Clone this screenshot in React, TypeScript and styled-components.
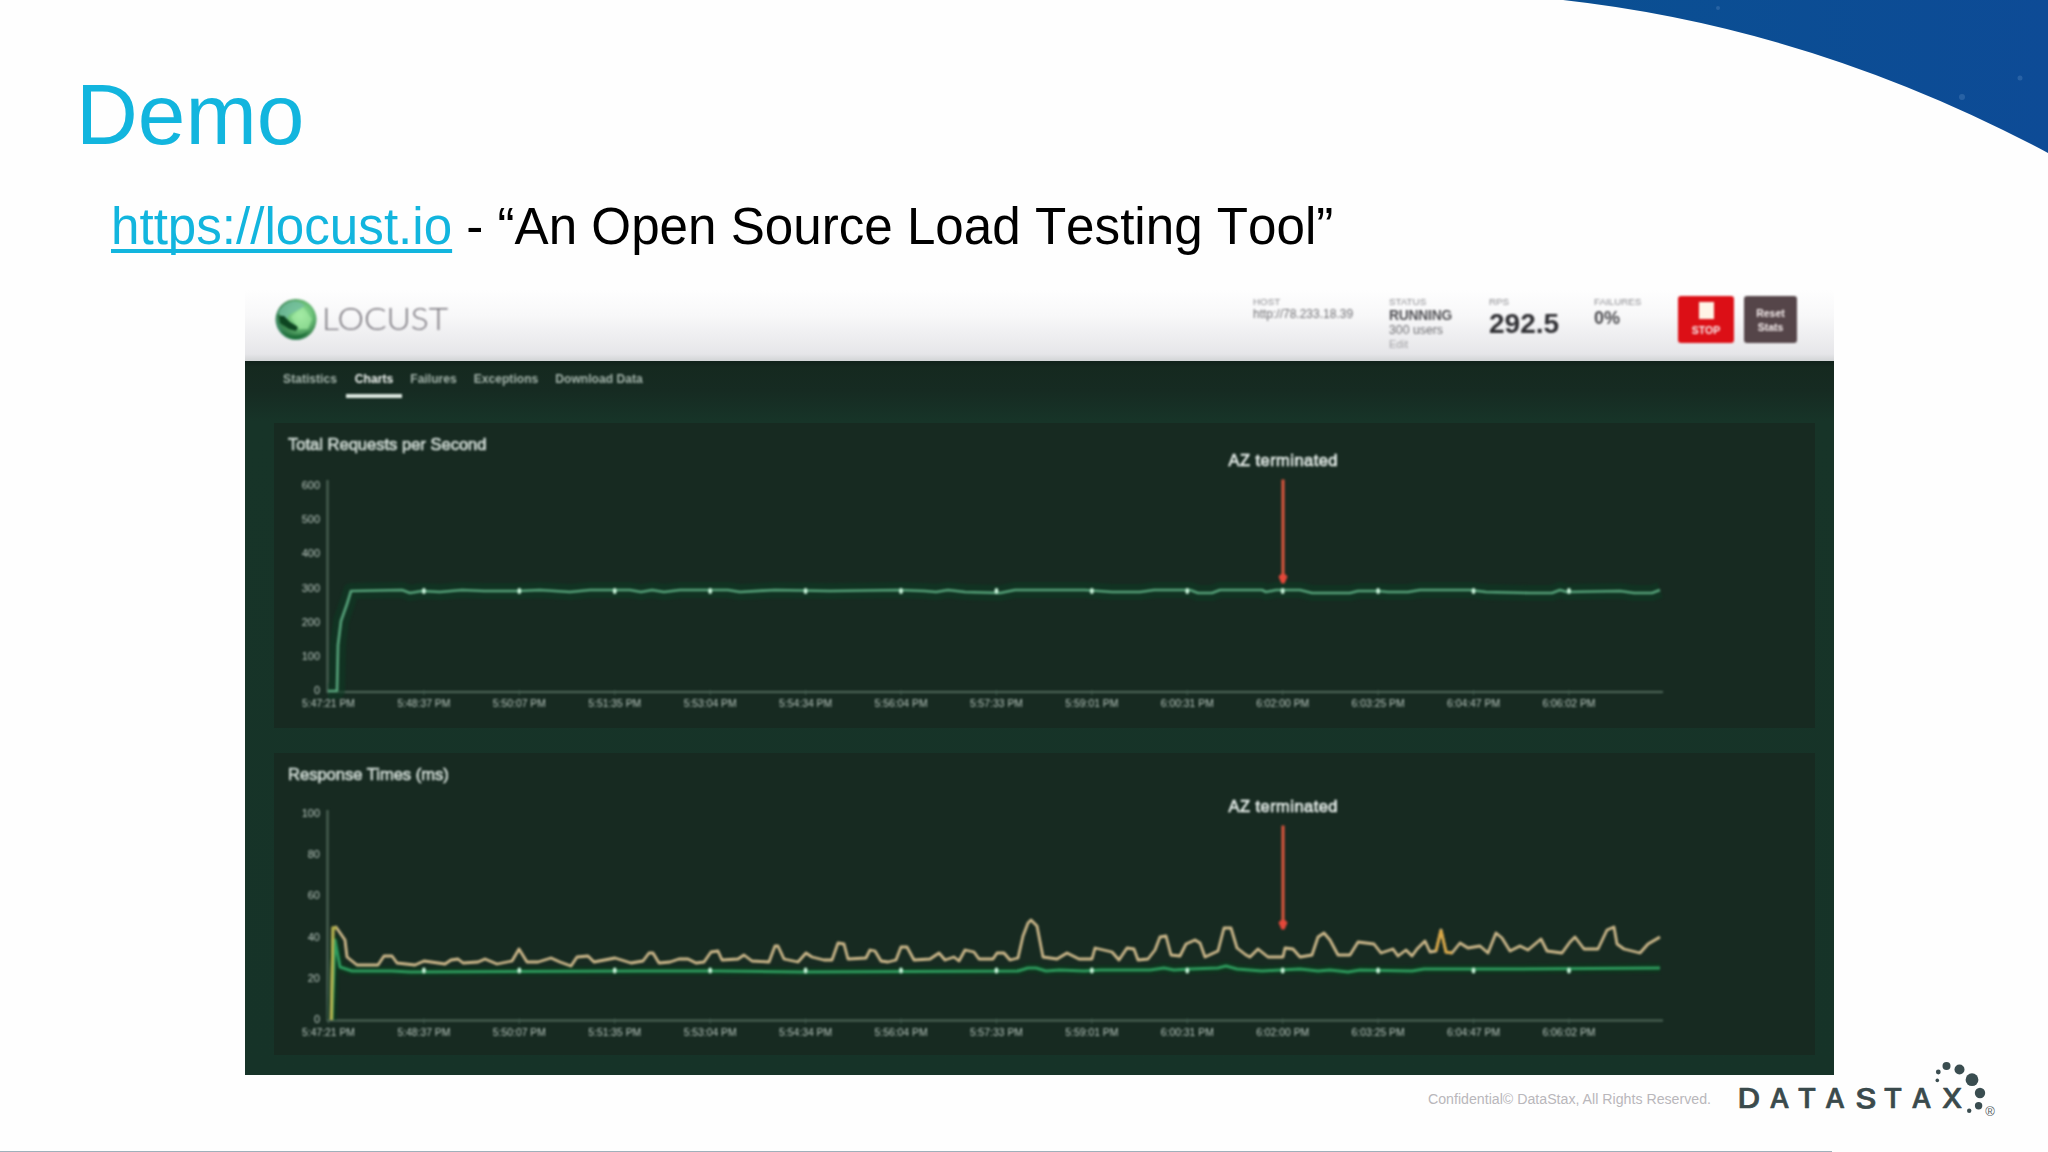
import React from "react";
import styled, { createGlobalStyle } from "styled-components";

const GlobalStyle = createGlobalStyle`
  * { box-sizing: border-box; }
  html, body { margin: 0; padding: 0; background: #fefefe; }
  body { font-family: "Liberation Sans", Arial, sans-serif; }
`;

const Slide = styled.main`
  position: relative;
  display: flex;
  flex-direction: column;
  width: 2048px;
  height: 1152px;
  overflow: hidden;
  background: #fefefe;
`;

const Corner = styled.svg`
  position: absolute;
  top: 0;
  right: 0;
`;

const Title = styled.h1`
  margin: 0;
  padding: 66px 0 0 76px;
  height: 190px;
  font-size: 85.6px;
  line-height: 97px;
  font-weight: 400;
  color: #12b5de;
`;

const Subtitle = styled.p`
  margin: 0;
  padding-left: 111px;
  height: 100px;
  font-size: 51.15px;
  line-height: 73px;
  white-space: nowrap;
  font-kerning: none;
  color: #000;
`;

const Link = styled.a`
  color: #12b5de;
  text-decoration: underline;
  text-decoration-thickness: 3.5px;
  text-underline-offset: 5px;
  text-decoration-skip-ink: none;
`;

const Dashboard = styled.section`
  display: flex;
  flex-direction: column;
  width: 1589px;
  height: 785px;
  margin-left: 245px;
`;

const Header = styled.header`
  display: flex;
  justify-content: space-between;
  height: 71px;
  flex: none;
  padding: 6px 37px 0 29px;
  background: linear-gradient(#fefefe 0, #f8f8f9 35%, #e6e6e9 90%, #d2d4d6 100%);
`;

const Brand = styled.div`
  display: flex;
  align-items: center;
  gap: 4px;
  height: 48px;
  filter: blur(0.8px);
`;

const Stats = styled.div`
  display: flex;
  filter: blur(0.8px);
`;

const Stat = styled.div<{ $w: number }>`
  display: flex;
  flex-direction: column;
  width: ${(p) => p.$w}px;
  white-space: nowrap;
`;

const StatLabel = styled.span`
  height: 12px;
  font-size: 9.8px;
  line-height: 12px;
  color: #8c8c90;
`;

const StatValue = styled.span<{ $size: number; $line: number; $color?: string; $bold?: boolean; $track?: number }>`
  font-size: ${(p) => p.$size}px;
  line-height: ${(p) => p.$line}px;
  font-weight: ${(p) => (p.$bold ? 700 : 400)};
  letter-spacing: ${(p) => p.$track ?? 0}px;
  color: ${(p) => p.$color ?? "#707074"};
`;

const HeaderButton = styled.button<{ $bg: string; $w: number }>`
  display: flex;
  flex-direction: column;
  align-items: center;
  justify-content: center;
  width: ${(p) => p.$w}px;
  height: 47px;
  margin-right: ${(p) => (p.$w > 54 ? 10 : 0)}px;
  padding: 0;
  border: 0;
  border-radius: 3px;
  background: ${(p) => p.$bg};
  color: #f7eeee;
  font: 700 10.5px/14px "Liberation Sans", Arial, sans-serif;
`;

const StopSquare = styled.i`
  width: 15px;
  height: 17px;
  margin-bottom: 4px;
  background: #fff4e6;
`;

const Body = styled.div`
  display: flex;
  flex-direction: column;
  flex: 1;
  background: linear-gradient(#10211a 0, #15291f 6px, #162b22 30px, #173428 60px, #163328 100%);
`;

const Tabs = styled.nav`
  display: flex;
  height: 62px;
  padding: 8px 0 0 29px;
  filter: blur(0.8px);
`;

const Tab = styled.span<{ $w: number; $active?: boolean }>`
  display: flex;
  justify-content: center;
  width: ${(p) => p.$w}px;
  height: 29px;
  padding-top: 2px;
  font-size: 12.1px;
  line-height: 16px;
  font-weight: 700;
  white-space: nowrap;
  color: ${(p) => (p.$active ? "#f4f8f5" : "#a5b5ac")};
  border-bottom: ${(p) => (p.$active ? "4px solid #dfe9e2" : "0")};
`;

const Card = styled.article<{ $h: number; $gap: number }>`
  display: flex;
  flex-direction: column;
  width: 1541px;
  height: ${(p) => p.$h}px;
  flex: none;
  margin: 0 0 ${(p) => p.$gap}px 29px;
  background: #172a21;
`;

const CardTitle = styled.h2`
  height: 42px;
  flex: none;
  margin: 0;
  padding: 11px 0 0 14px;
  font-size: 16.55px;
  line-height: 22px;
  font-weight: 400;
  color: #cfdad4;
  -webkit-text-stroke: 0.7px #cfdad4;
  filter: blur(0.8px);
`;

const ChartSvg = styled.svg`
  display: block;
  flex: none;
  overflow: visible;
  filter: blur(0.8px);
  font-family: "Liberation Sans", Arial, sans-serif;
`;

const Footer = styled.footer`
  display: flex;
  flex: 1;
  padding-left: 1428px;
`;

const Copyright = styled.span`
  width: 308px;
  padding-top: 15px;
  font-size: 14.18px;
  line-height: 18px;
  white-space: nowrap;
  color: #b9b7bb;
`;

const LogoSvg = styled.svg`
  display: block;
  margin-top: -18px;
`;

const BottomRule = styled.div`
  width: 1832px;
  height: 1px;
  flex: none;
  background: #9fb0ba;
`;

const times = [
  "5:47:21 PM", "5:48:37 PM", "5:50:07 PM", "5:51:35 PM", "5:53:04 PM", "5:54:34 PM", "5:56:04 PM",
  "5:57:33 PM", "5:59:01 PM", "6:00:31 PM", "6:02:00 PM", "6:03:25 PM", "6:04:47 PM", "6:06:02 PM",
];
const tickX = (i: number) => 328.5 + i * 95.42;

const requests =
  "328,691 337,691 338,645 341,621 347,604 351,591 402,590 410,593 422,591 440,592 462,590 484,591 518,591 540,590 570,592 590,590 630,590 641,592 652,590 664,592 680,590 728,590 740,592 775,590 830,591 900,590 925,591 936,592 948,590 965,592 1000,593 1015,590 1085,590 1112,592 1140,592 1154,590 1190,590 1198,593 1212,593 1220,590 1262,590 1266,592 1276,590 1300,590 1312,593 1350,593 1358,591 1378,591 1388,592 1408,592 1420,590 1470,590 1486,592 1530,593 1552,593 1560,590 1567,592 1620,591 1634,593 1652,593 1660,590";

const median =
  "332,1020 335,940 340,967 352,971 392,971 410,972 640,971 720,971 800,972 1018,971 1028,968 1036,968 1046,971 1060,970 1084,971 1100,970 1150,970 1164,968 1174,970 1190,969 1218,968 1226,966 1237,969 1262,971 1300,969 1318,971 1330,970 1348,972 1360,970 1412,971 1424,969 1520,969 1660,968";

const percentile =
  "331,1020 333,928 336,927 345,940 347,957 357,965 378,965 384,956 392,956 397,963 415,965 424,961 445,964 451,960 458,959 463,963 478,962 485,959 497,964 512,961 519,949 527,962 538,962 551,958 560,962 571,966 577,957 588,956 594,962 615,958 631,963 643,961 649,953 653,953 659,963 670,962 679,959 688,959 696,963 704,962 711,952 718,951 722,960 738,959 744,955 752,961 769,962 775,946 778,946 784,959 798,962 806,953 812,957 824,960 832,960 838,943 844,944 848,959 866,958 870,950 875,951 881,961 888,962 896,960 901,947 907,947 914,960 930,959 939,953 945,960 954,957 959,961 965,950 974,952 979,959 993,959 997,953 1004,953 1010,960 1018,958 1023,936 1028,923 1031,920 1037,926 1043,957 1057,959 1067,953 1079,959 1092,959 1095,948 1112,952 1119,960 1127,948 1134,949 1138,960 1148,959 1155,950 1160,937 1166,936 1171,955 1180,956 1186,944 1195,940 1200,943 1205,957 1218,951 1224,928 1231,928 1237,948 1246,955 1250,957 1258,949 1268,957 1283,957 1285,948 1293,949 1300,957 1312,955 1318,937 1324,933 1330,940 1338,955 1350,955 1358,942 1374,944 1381,953 1393,949 1398,956 1406,950 1412,956 1417,949 1425,941 1430,952 1436,951 1441,930 1446,952 1452,953 1460,943 1468,948 1480,946 1488,953 1496,933 1502,938 1510,951 1520,946 1528,950 1541,939 1547,951 1562,953 1570,942 1575,937 1584,949 1598,949 1607,930 1614,927 1617,944 1624,949 1640,953 1648,944 1660,937";

interface ChartProps {
  top: number;
  height: number;
  axisTop: number;
  axisBottom: number;
  labels: string[];
  step: number;
  labelTop: number;
  markerY: number;
  annotationY: number;
  children: React.ReactNode;
}

function Chart(p: ChartProps) {
  const arrowTop = p.annotationY + 19;
  return (
    <ChartSvg width={1541} height={p.height} viewBox={`274 ${p.top} 1541 ${p.height}`}>
      <path d={`M327.5 ${p.axisTop}V${p.axisBottom}H1663`} fill="none" stroke="#50695b" strokeWidth={2} />
      {p.labels.map((l, i) => (
        <text key={l} x={320} y={p.labelTop + i * p.step + 4} fontSize={11} textAnchor="end" fill="#b6c4bc">
          {l}
        </text>
      ))}
      {times.map((t, i) => (
        <g key={t}>
          <path d={`M${tickX(i)} ${p.axisBottom - 2}v5`} stroke="#486153" strokeWidth={1} />
          <text
            x={tickX(i)}
            y={p.axisBottom + 15}
            fontSize={10.5}
            textAnchor="middle"
            textLength={53}
            lengthAdjust="spacingAndGlyphs"
            fill="#b6c4bc"
          >
            {t}
          </text>
        </g>
      ))}
      {p.children}
      {times.slice(1).map((t, i) => (
        <ellipse key={t} cx={tickX(i + 1)} cy={p.markerY} rx={1.9} ry={3} fill="#c9f3da" />
      ))}
      <text
        x={1283}
        y={p.annotationY + 5.5}
        fontSize={16.5}
        textAnchor="middle"
        textLength={109}
        fill="#e2eae6"
        stroke="#e2eae6"
        strokeWidth={0.7}
      >
        AZ terminated
      </text>
      <path d={`M1283 ${arrowTop}v99`} stroke="#d4543c" strokeWidth={3.2} />
      <path d={`M1278.5 ${arrowTop + 97}q4.500 -6 9 0l-3 7h-3z`} fill="#e4483a" />
    </ChartSvg>
  );
}

const letters: [string, number, number][] = [
  ["D", 1749, 1.15], ["A", 1779.5, 1], ["T", 1807, 1.05], ["A", 1835, 1],
  ["S", 1866, 1.2], ["T", 1893, 1.05], ["A", 1921.5, 1], ["X", 1952, 1.05],
];
const dots: [number, number, number][] = [
  [1937.3, 1080.4, 1.8], [1938.3, 1072, 2.4], [1946.5, 1066, 4], [1959.5, 1069.5, 5],
  [1972, 1079.7, 6.4], [1980, 1093, 5.2], [1978.6, 1105.8, 3.7], [1969.2, 1110.7, 2.2],
];

export default function App() {
  return (
    <>
      <GlobalStyle />
      <Slide>
        <Corner width={488} height={156} viewBox="1560 0 488 156">
          <defs>
            <linearGradient id="blue" x1="0" x2="1">
              <stop offset="0" stopColor="#0a4f92" />
              <stop offset="1" stopColor="#0d4b96" />
            </linearGradient>
          </defs>
          <path d="M1563 0Q1814 28 2048 153V0Z" fill="url(#blue)" />
          <g fill="#4378b4" opacity={0.5}>
            <circle cx={1718} cy={8} r={2} />
            <circle cx={1962} cy={97} r={3} />
            <circle cx={2020} cy={78} r={2.5} />
          </g>
        </Corner>
        <Title>Demo</Title>
        <Subtitle>
          <Link>https://locust.io</Link> - “An Open Source Load Testing Tool”
        </Subtitle>
        <Dashboard>
          <Header>
            <Brand>
              <svg width={44} height={44} viewBox="0 0 44 44">
                <defs>
                  <radialGradient id="globe" cx="0.6" cy="0.4" r="0.6">
                    <stop offset="0" stopColor="#a8efaa" />
                    <stop offset="0.5" stopColor="#6cc178" />
                    <stop offset="0.85" stopColor="#38834d" />
                    <stop offset="1" stopColor="#3f8a66" />
                  </radialGradient>
                </defs>
                <circle cx={22} cy={21.5} r={20.5} fill="url(#globe)" />
                <path d="M4 15Q8 5 19 3Q27 3 31 8L15 17L12 23Z" fill="#73bda0" opacity={0.8} />
                <path d="M5 18L10 18L16 24L24 29L22 33L15 31L6 25Z" fill="#0d4521" />
                <path d="M17 19L29 9L38 21L34 31L25 31Z" fill="#a1eaa2" opacity={0.65} />
                <path d="M6 31Q19 43 35 33Q28 42 20 41Q11 40 6 31Z" fill="#1f7039" />
              </svg>
              <svg width={132} height={44}>
                <text
                  x={0}
                  y={32}
                  fontFamily="Lato, sans-serif"
                  fontWeight={300}
                  fontSize={31}
                  textLength={126}
                  lengthAdjust="spacingAndGlyphs"
                  fill="#77747b"
                >
                  LOCUST
                </text>
              </svg>
            </Brand>
            <Stats>
              <Stat $w={136}>
                <StatLabel>HOST</StatLabel>
                <StatValue $size={12} $line={13}>http://78.233.18.39</StatValue>
              </Stat>
              <Stat $w={100}>
                <StatLabel>STATUS</StatLabel>
                <StatValue $size={13.8} $line={16} $bold $color="#505054" $track={-0.2}>RUNNING</StatValue>
                <StatValue $size={12.3} $line={13}>300 users</StatValue>
                <StatValue $size={11} $line={14} $color="#a2a2a6">Edit</StatValue>
              </Stat>
              <Stat $w={105}>
                <StatLabel>RPS</StatLabel>
                <StatValue $size={28} $line={31} $bold $color="#303034">292.5</StatValue>
              </Stat>
              <Stat $w={84}>
                <StatLabel>FAILURES</StatLabel>
                <StatValue $size={18} $line={21} $bold $color="#4b4b4f">0%</StatValue>
              </Stat>
              <HeaderButton $bg="#dc0f16" $w={56}>
                <StopSquare />
                STOP
              </HeaderButton>
              <HeaderButton $bg="#554549" $w={53}>
                <span>Reset</span>
                <span>Stats</span>
              </HeaderButton>
            </Stats>
          </Header>
          <Body>
            <Tabs>
              <Tab $w={72}>Statistics</Tab>
              <Tab $w={56} $active>Charts</Tab>
              <Tab $w={63}>Failures</Tab>
              <Tab $w={82}>Exceptions</Tab>
              <Tab $w={104}>Download Data</Tab>
            </Tabs>
            <Card $h={305} $gap={25}>
              <CardTitle>Total Requests per Second</CardTitle>
              <Chart
                top={465}
                height={263}
                axisTop={480}
                axisBottom={692}
                labels={["600", "500", "400", "300", "200", "100", "0"]}
                labelTop={485}
                step={34.2}
                markerY={591}
                annotationY={460.5}
              >
                <polyline points={requests} fill="none" stroke="#0d3823" strokeWidth={16} strokeLinejoin="round" opacity={0.6} />
                <polyline points={requests} fill="none" stroke="#56a27a" strokeWidth={2.7} strokeLinejoin="round" />
              </Chart>
            </Card>
            <Card $h={302} $gap={0}>
              <CardTitle>Response Times (ms)</CardTitle>
              <Chart
                top={795}
                height={260}
                axisTop={810}
                axisBottom={1020.5}
                labels={["100", "80", "60", "40", "20", "0"]}
                labelTop={813}
                step={41.2}
                markerY={970.5}
                annotationY={806.5}
              >
                <polyline points={median} fill="none" stroke="#0c381d" strokeWidth={10} strokeLinejoin="round" opacity={0.6} />
                <polyline points={median} fill="none" stroke="#2e9a5d" strokeWidth={3} strokeLinejoin="round" />
                <polyline points={percentile} fill="none" stroke="#cfba8c" strokeWidth={2.8} strokeLinejoin="round" />
                <polyline points="331.500,1020 333,928 337,928" fill="none" stroke="#b2b04a" strokeWidth={3} />
                <polyline points="1436,951 1441,930 1446,952 1452,953" fill="none" stroke="#dda945" strokeWidth={2.7} />
              </Chart>
            </Card>
          </Body>
        </Dashboard>
        <Footer>
          <Copyright>Confidential© DataStax, All Rights Reserved.</Copyright>
          <LogoSvg width={264} height={66} viewBox="1736 1057 264 66">
            {letters.map(([c, x, stretch]) => (
              <text
                key={x}
                transform={`translate(${x} 1108.3) scale(${stretch} 1)`}
                fontFamily="Inter, sans-serif"
                fontWeight={500}
                fontSize={27.5}
                textAnchor="middle"
                fill="#3a4a4c"
                stroke="#3a4a4c"
                strokeWidth={0.7}
                strokeLinejoin="round"
              >
                {c}
              </text>
            ))}
            {dots.map(([cx, cy, r]) => (
              <circle key={cy} cx={cx} cy={cy} r={r} fill="#3a4d50" />
            ))}
            <text x={1990} y={1115.5} fontFamily="Liberation Sans, sans-serif" fontSize={13} textAnchor="middle" fill="#515b5e">
              ®
            </text>
          </LogoSvg>
        </Footer>
        <BottomRule />
      </Slide>
    </>
  );
}
